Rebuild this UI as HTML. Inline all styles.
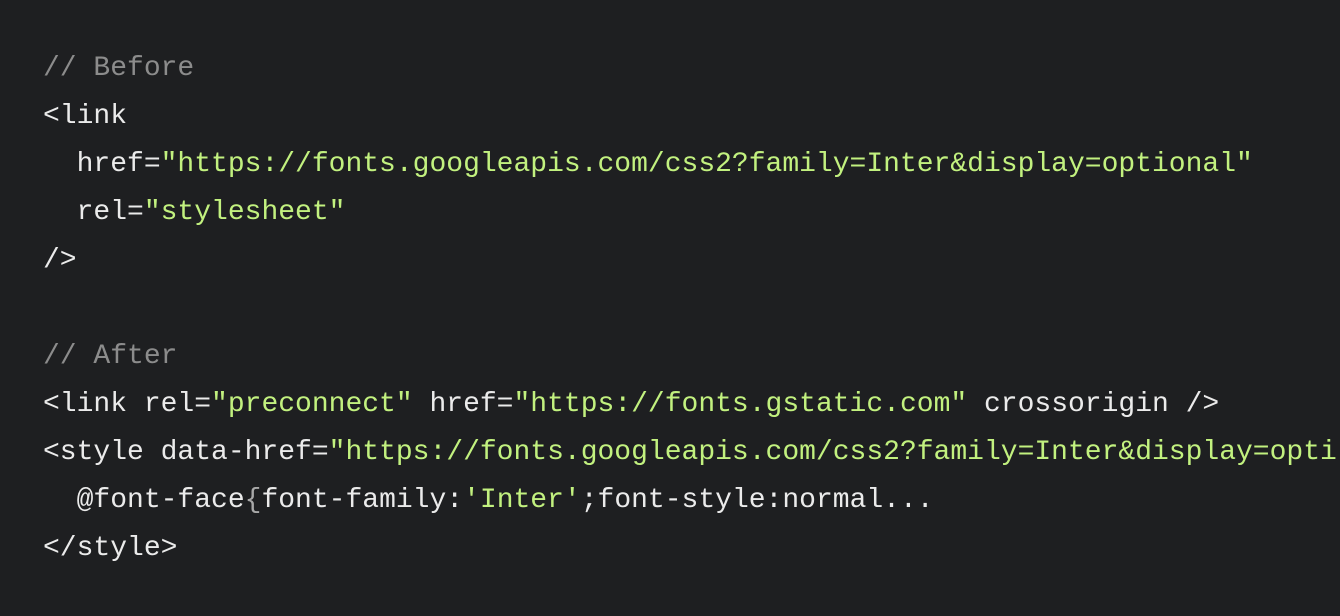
<!DOCTYPE html>
<html><head><style>
html,body{margin:0;padding:0;background:#1e1f21;}
body{width:1340px;height:616px;overflow:hidden;}
pre{margin:0;padding:45px 0 0 43px;font-family:"Liberation Mono",monospace;font-size:28px;line-height:48px;color:#ebebeb;white-space:pre;overflow:hidden;width:1297px;}
.c{color:#8c8c8c}.s{color:#c2f17f}.p{color:#a8a8a8}
</style></head><body><pre><span class="c">// Before</span>
&lt;link
  href=<span class="s">"https://fonts.googleapis.com/css2?family=Inter&amp;display=optional"</span>
  rel=<span class="s">"stylesheet"</span>
/&gt;

<span class="c">// After</span>
&lt;link rel=<span class="s">"preconnect"</span> href=<span class="s">"https://fonts.gstatic.com"</span> crossorigin /&gt;
&lt;style data-href=<span class="s">"https://fonts.googleapis.com/css2?family=Inter&amp;display=opti</span>
  @font-face<span class="p">{</span>font-family:<span class="s">'Inter'</span>;font-style:normal...
&lt;/style&gt;</pre></body></html>
